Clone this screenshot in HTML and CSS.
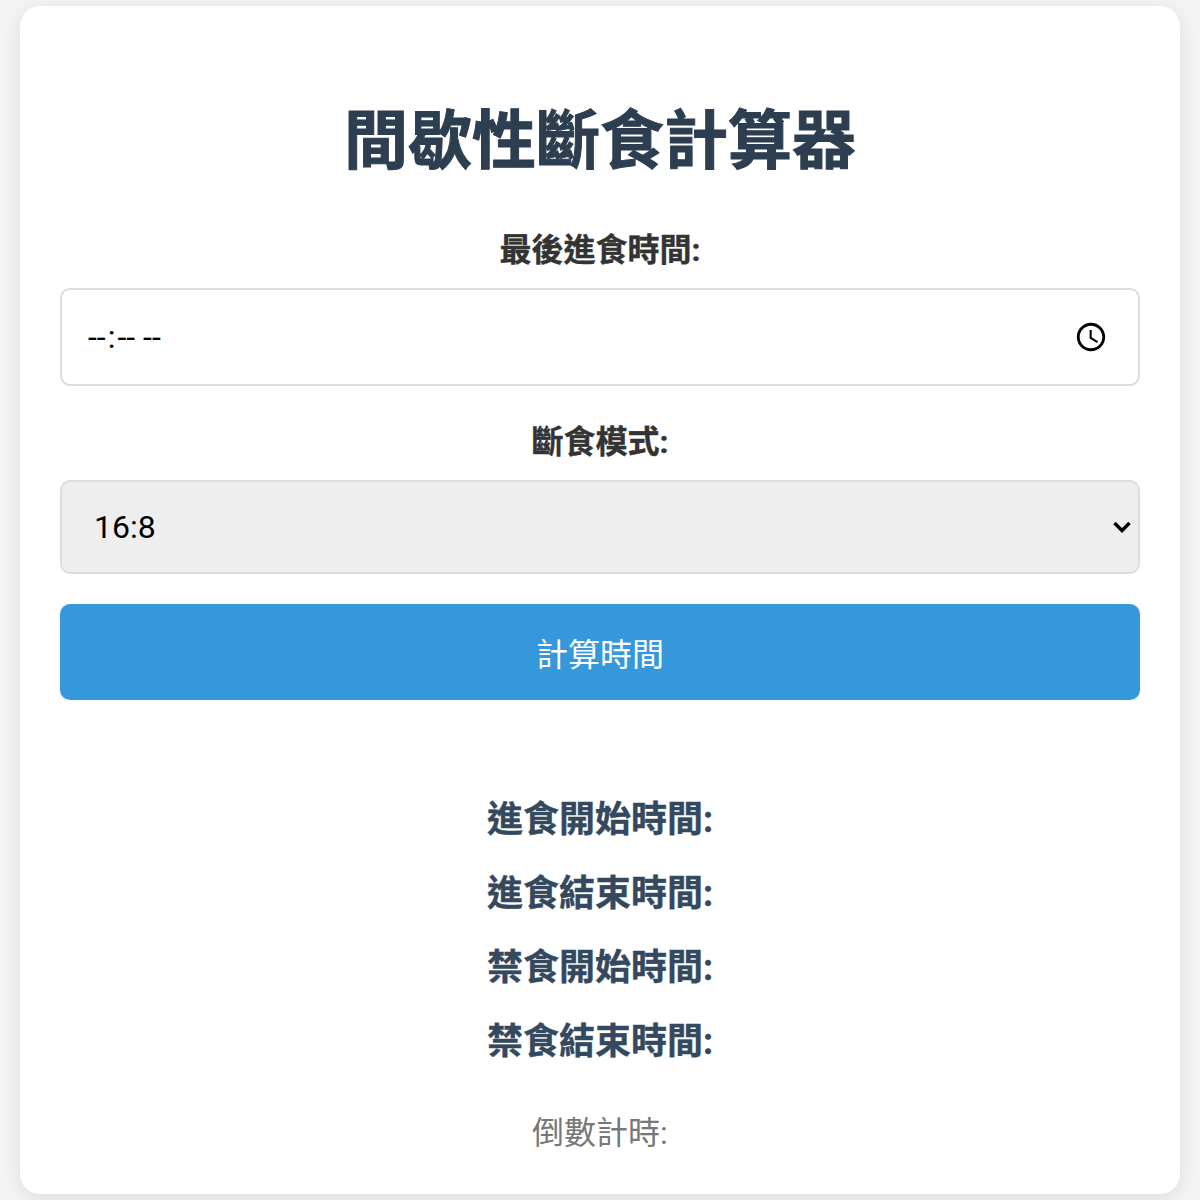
FILE: index.html
```html
<!DOCTYPE html>
<html lang="zh-Hant">
<head>
<meta charset="utf-8">
<title>間歇性斷食計算器</title>
<link rel="stylesheet" href="styles.css">
</head>
<body>
<main class="card">
  <h1 class="title">間歇性斷食計算器</h1>
  <label class="field-label" for="last">最後進食時間:</label>
  <input class="time-input" id="last" type="time">
  <label class="field-label" for="mode">斷食模式:</label>
  <select class="mode-select" id="mode">
    <option>16:8</option>
    <option>18:6</option>
    <option>20:4</option>
  </select>
  <button class="calc-button" type="button">計算時間</button>
  <section class="results">
    <p class="result-line">進食開始時間:</p>
    <p class="result-line">進食結束時間:</p>
    <p class="result-line">禁食開始時間:</p>
    <p class="result-line">禁食結束時間:</p>
    <p class="countdown">倒數計時:</p>
  </section>
</main>
</body>
</html>
```
FILE: styles.css
```css
html, body { margin: 0; padding: 0; }
body {
  background: #f4f4f4;
  font-family: Roboto, "Noto Sans CJK TC", sans-serif;
  zoom: 2;
  height: 600px;
  overflow: hidden;
  padding: 3px 10px;
  box-sizing: border-box;
}
.card {
  background: #fff;
  border-radius: 10px;
  box-shadow: 0 2px 10px rgba(0,0,0,0.1);
  padding: 20px;
  height: 594px;
  box-sizing: border-box;
  text-align: center;
}
.title {
  font-size: 32px;
  line-height: 38px;
  color: #2c3e50;
  margin: 29px 0 25.5px;
  font-weight: 700;
  -webkit-text-stroke: 0.5px #2c3e50;
}
.field-label {
  display: block;
  font-size: 16px;
  font-weight: 700;
  color: #333;
  line-height: 19px;
  margin-bottom: 9.5px;
  -webkit-text-stroke: 0.2px #333;
}
.time-input, .mode-select {
  display: block;
  width: 100%;
  box-sizing: border-box;
  border: 1px solid #ddd;
  border-radius: 5px;
  font-family: inherit;
  font-size: 16px;
}
.time-input { height: 49px; padding: 0 12px; background: #fff; margin-bottom: 18.5px; }
.mode-select {
  height: 47px;
  padding: 0 12px 0 16px;
  appearance: none;
  background: #eee url("data:image/svg+xml,%3Csvg xmlns='http://www.w3.org/2000/svg' viewBox='0 0 20 14'%3E%3Cpath d='M2.5 3l7.5 7.5L17.5 3' fill='none' stroke='%23000' stroke-width='3.4'/%3E%3C/svg%3E") no-repeat right 3px center / 10px 7px;
  color: #000;
  margin-bottom: 15px;
}
.calc-button {
  display: block;
  width: 100%;
  height: 48px;
  border: 0;
  border-radius: 5px;
  background: #3498db;
  color: #fff;
  font-family: inherit;
  font-size: 16px;
}
.results { margin-top: 49.5px; }
.result-line {
  font-size: 18px;
  font-weight: 700;
  color: #34495e;
  line-height: 21px;
  margin: 0 0 16px;
  -webkit-text-stroke: 0.2px #34495e;
}
.countdown {
  font-size: 16px;
  color: #777;
  line-height: 19px;
  margin: 25.5px 0 0;
}
```
